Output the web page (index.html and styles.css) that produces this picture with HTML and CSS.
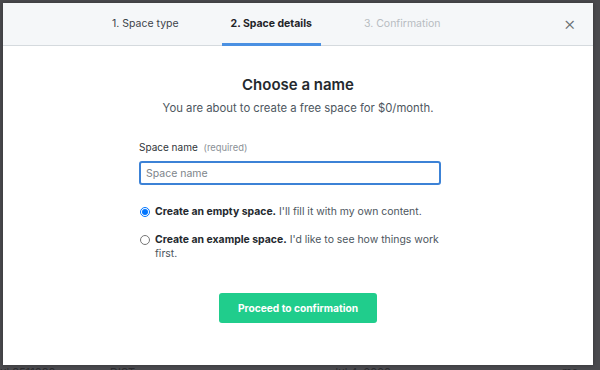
FILE: index.html
```html
<!DOCTYPE html>
<html lang="en">

<head>
    <meta charset="UTF-8">
    <meta name="viewport" content="width=device-width, initial-scale=1.0">
    <title>Create a space</title>
    <link rel="stylesheet" href="styles.css">
</head>

<body>
    <div class="modal">
        <header class="steps">
            <nav class="tabs">
                <span class="tab">1. Space type</span>
                <span class="tab active">2. Space details</span>
                <span class="tab todo">3. Confirmation</span>
            </nav>
            <span class="close">&times;</span>
        </header>

        <section class="body">
            <h2>Choose a name</h2>
            <p class="lead">You are about to create a free space for $0/month.</p>

            <form class="form">
                <label class="label" for="spaceName">Space name <small>(required)</small></label>
                <input type="text" id="spaceName" class="field" placeholder="Space name" autofocus>

                <label class="option">
                    <input type="radio" name="kind" checked>
                    <span><b>Create an empty space.</b> I'll fill it with my own content.</span>
                </label>
                <label class="option">
                    <input type="radio" name="kind">
                    <span><b>Create an example space.</b> I'd like to see how things work first.</span>
                </label>

                <div class="actions">
                    <button type="submit" class="bt">Proceed to confirmation</button>
                </div>
            </form>
        </section>
    </div>

    <div class="behind">
        <span>ul 8511080</span>
        <span>DIST</span>
        <span>Jul 4, 2020</span>
        <span>me</span>
    </div>
</body>
</html>
```

FILE: styles.css
```css
body {
    margin: 0;
    background: #4a4a4e;
    font-family: Inter, "Noto Sans", sans-serif;
    color: #24292e;
    height: 370px;
    overflow: hidden;
}
.modal {
    margin: 3px 7px 0 3px;
    height: 362px;
    background: #fff;
    box-shadow: 0 0 4px rgba(0, 0, 0, 0.3);
    display: flex;
    flex-direction: column;
}
.steps {
    height: 42px;
    background: #f5f7f9;
    border-bottom: 1px solid #d5dade;
    display: flex;
    align-items: stretch;
    padding-left: 100px;
    padding-right: 17px;
}
.tabs {
    display: flex;
    gap: 34px;
}
.tab {
    display: flex;
    align-items: center;
    padding: 1px 9px 0;
    font-size: 10.5px;
    color: #3d4349;
    border-bottom: 3px solid transparent;
    margin-bottom: -1px;
}
.tab.active {
    font-weight: 700;
    color: #1f2328;
    border-bottom-color: #4a90e2;
}
.tab.todo {
    color: #b7bcc1;
}
.close {
    margin-left: auto;
    display: flex;
    align-items: center;
    font-size: 19px;
    font-weight: 300;
    color: #6a6f74;
    padding-bottom: 1px;
}
.body {
    display: flex;
    flex-direction: column;
    align-items: center;
    padding-top: 29px;
}
h2 {
    margin: 0;
    font-size: 15px;
    line-height: 20px;
    font-weight: 600;
    color: #24292e;
}
.lead {
    margin: 5px 0 0;
    font-size: 11.3px;
    line-height: 16px;
    color: #4d565e;
}
.form {
    width: 318px;
    margin-top: 24px;
    display: flex;
    flex-direction: column;
}
.label {
    font-size: 10px;
    line-height: 14px;
    color: #2f353a;
}
.label small {
    font-size: 9.4px;
    color: #8a9096;
    margin-left: 3px;
}
.field {
    box-sizing: border-box;
    width: 302px;
    height: 24px;
    margin-top: 6px;
    padding: 0 5px;
    border: 2px solid #3c82d6;
    border-radius: 3px;
    font-family: inherit;
    font-size: 10.5px;
    outline: none;
    color: #24292e;
}
.field::placeholder {
    color: #7d848a;
}
.option {
    display: flex;
    align-items: flex-start;
    gap: 5px;
    font-size: 10.45px;
    line-height: 14px;
    color: #4d565e;
    margin-top: 20px;
}
.option + .option {
    margin-top: 14px;
}
.option input {
    margin: 2px 0 0 1px;
    width: 10px;
    height: 10px;
    flex-shrink: 0;
}
.option b {
    color: #24292e;
}
.actions {
    display: flex;
    justify-content: center;
    margin-top: 32px;
}
.bt {
    width: 158px;
    height: 30px;
    background: #20cd8c;
    color: #fff;
    border: none;
    border-radius: 3px;
    font-family: inherit;
    font-size: 10.2px;
    font-weight: 700;
}
.behind {
    display: flex;
    font-size: 11px;
    line-height: 12px;
    color: #2b2b2f;
    margin-top: 1px;
}
.behind span:nth-child(1) { width: 110px; }
.behind span:nth-child(2) { width: 222px; }
.behind span:nth-child(3) { width: 230px; }
```
